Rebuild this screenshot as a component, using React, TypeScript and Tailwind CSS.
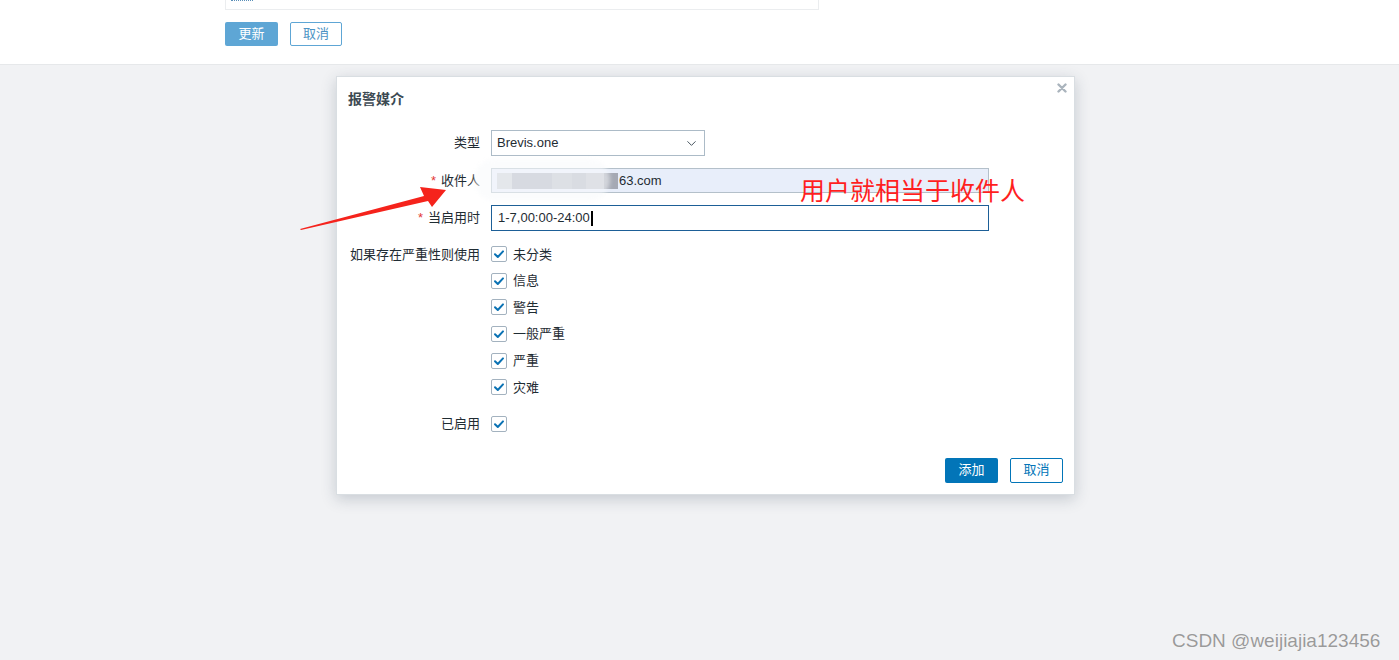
import { ChevronDown } from "lucide-react";

const cjk = { fontFamily: '"Liberation Sans", "Noto Sans CJK SC", sans-serif' };

const severities = ["未分类", "信息", "警告", "一般严重", "严重", "灾难"];

function Check() {
    return (
        <span className="flex h-[16px] w-[16px] items-center justify-center rounded-[2px] border border-[#a3b2bf] bg-white">
            <svg width="12" height="12" viewBox="0 0 12 12">
                <path d="M2 6.2 L4.8 9 L10 3.4" fill="none" stroke="#0a72b4" strokeWidth="2" strokeLinecap="round" strokeLinejoin="round" />
            </svg>
        </span>
    );
}

function Label({ text, required }: { text: string; required?: boolean }) {
    return (
        <div className="flex h-full items-center justify-end text-[13px] text-[#1f2c33]">
            {required && <span className="mr-[5px] text-[#e33734]">*</span>}
            {text}
        </div>
    );
}

export default function App() {
    return (
        <div className="relative h-[660px] w-[1399px] overflow-hidden bg-[#f1f2f4]" style={cjk}>
            {/* page behind the dialog */}
            <div className="h-[65px] border-b border-[#e6e8ea] bg-white">
                <div className="ml-[225px] h-[10px] w-[594px] border border-t-0 border-[#ebedef] bg-white pl-[5px]">
                    <div className="w-[22px] border-t border-dotted border-[#5b8fb8]" />
                </div>
                <div className="ml-[225px] mt-[12px] flex gap-[12px]">
                    <button className="h-[24px] w-[53px] rounded-[2px] bg-[#5ea6d5] text-[13px] text-white">更新</button>
                    <button className="h-[24px] w-[52px] rounded-[2px] border border-[#5ea6d5] bg-white text-[13px] text-[#4d93c4]">取消</button>
                </div>
            </div>

            <div className="pt-[11px]">
                <div className="ml-[336px] w-[739px] border border-[#d9dee2] bg-white shadow-[0_4px_14px_rgba(40,60,80,0.22)]">
                    <div className="relative h-[53px] pl-[11px] pt-[13px]">
                        <div className="text-[14px] font-bold leading-[18px] text-[#3d4a53]">报警媒介</div>
                        <svg className="absolute right-[7px] top-[6px]" width="10" height="10" viewBox="0 0 10 10">
                            <path d="M1.5 1.5 L8.5 8.5 M8.5 1.5 L1.5 8.5" stroke="#aab4bd" strokeWidth="2.4" strokeLinecap="round" />
                        </svg>
                    </div>

                    <div className="grid grid-cols-[143px_1fr] gap-x-[11px]">
                        <div className="h-[26px]"><Label text="类型" /></div>
                        <div className="flex h-[26px] w-[214px] items-center justify-between border border-[#acbbc7] px-[5px] text-[13px] text-[#1f2c33]">
                            <span>Brevis.one</span>
                            <ChevronDown size={15} strokeWidth={1.5} className="text-[#3c4a55]" />
                        </div>

                        <div className="mt-[12px] h-[25px]"><Label text="收件人" required /></div>
                        <div className="mt-[12px] flex h-[25px] w-[498px] items-center border border-[#b4c0ca] bg-[#e8eefa] pl-[5px] text-[13px] text-[#1f2c33]">
                            <span className="flex h-[16px] blur-[0.6px]">
                                <span className="w-[15px] bg-[#ccd0d8]" />
                                <span className="w-[40px] bg-[#afb3c0]" />
                                <span className="w-[20px] bg-[#bcc0ca]" />
                                <span className="w-[14px] bg-[#b4b8c3]" />
                                <span className="w-[18px] bg-[#c0c4cd]" />
                                <span className="w-[14px] bg-[#a5a9b4]" />
                            </span>
                            <span className="pl-[1px]">63.com</span>
                        </div>

                        <div className="mt-[12px] h-[26px]"><Label text="当启用时" required /></div>
                        <div className="mt-[12px] flex h-[26px] w-[498px] items-center border border-[#1d5f97] px-[6px] text-[13px] text-[#1f2c33]">
                            1-7,00:00-24:00<span className="ml-[1px] h-[15px] w-[2px] bg-black" />
                        </div>

                        <div className="mt-[10px] h-[26.6px]"><Label text="如果存在严重性则使用" /></div>
                        <div className="mt-[10px] flex flex-col">
                            {severities.map((s) => (
                                <div key={s} className="flex h-[26.6px] items-center gap-[6px] text-[13px] text-[#1f2c33]">
                                    <Check />
                                    <span>{s}</span>
                                </div>
                            ))}
                        </div>

                        <div className="mt-[10px] h-[27px]"><Label text="已启用" /></div>
                        <div className="mt-[10px] flex h-[27px] items-center"><Check /></div>
                    </div>

                    <div className="mt-[20px] flex justify-end gap-[12px] pb-[11px] pr-[11px]">
                        <button className="h-[25px] w-[53px] rounded-[2px] bg-[#0275b8] text-[13px] text-white">添加</button>
                        <button className="h-[25px] w-[53px] rounded-[2px] border border-[#0275b8] bg-white text-[13px] text-[#0275b8]">取消</button>
                    </div>
                </div>
            </div>

            {/* annotation overlays */}
            <div className="absolute left-[474px] top-[159px] h-[42px] w-[136px] rounded-[21px] bg-[#f7f9fc]/55 blur-[2px]" />
            <div className="absolute left-[800px] top-[175px] text-[25px] leading-[32px] text-[#ff1f1f]">用户就相当于收件人</div>
            <svg className="absolute left-0 top-0" width="1399" height="660" viewBox="0 0 1399 660">
                <polygon points="300,229 424,196 420,187 446,190 432,207 428,201 301,230" fill="#f5231c" />
            </svg>
            <div className="absolute left-[1172px] top-[627px] text-[19px] text-[#9a9a9a] [text-shadow:0_0_1px_#fff]" style={{ fontFamily: '"Liberation Sans", sans-serif' }}>
                CSDN @weijiajia123456
            </div>
        </div>
    );
}
